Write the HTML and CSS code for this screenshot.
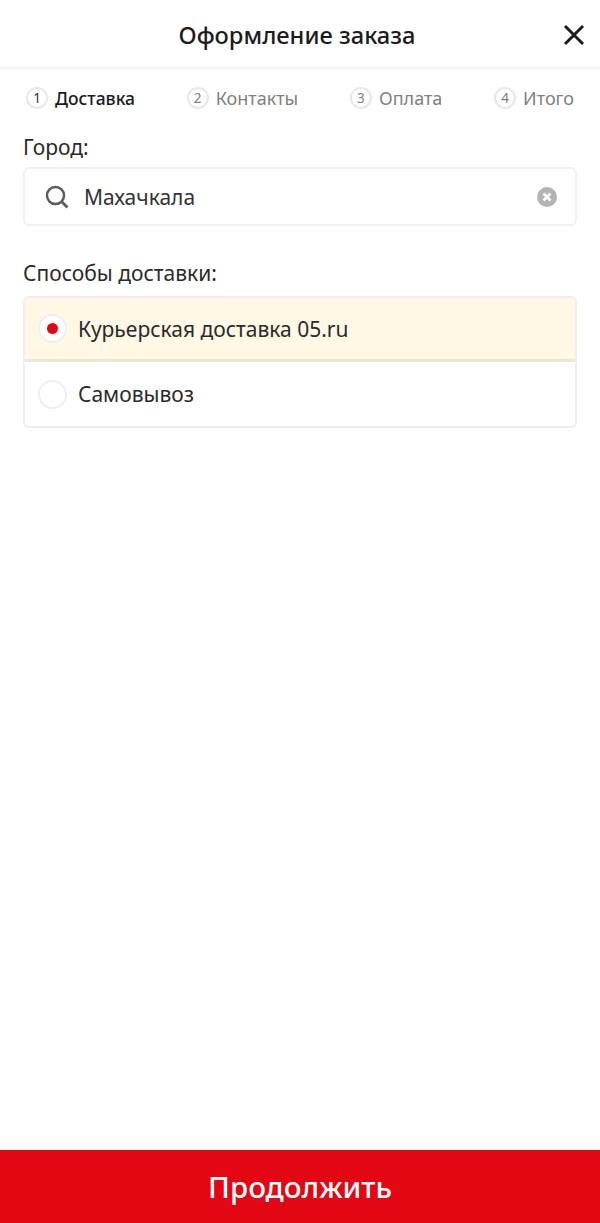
FILE: index.html
```html
<!DOCTYPE html>
<html lang="ru">
<head>
<meta charset="utf-8">
<title>Оформление заказа</title>
<link rel="stylesheet" href="styles.css">
</head>
<body>
<div class="page">
  <header class="header">
    <h1 class="title">Оформление заказа</h1>
    <svg class="close" viewBox="0 0 22 22" width="22" height="22"><path d="M2 2 L20 20 M20 2 L2 20" fill="none" stroke="#1c1c1c" stroke-width="3"/></svg>
  </header>
  <nav class="steps">
    <div class="step active"><span class="num">1</span><span>Доставка</span></div>
    <div class="step"><span class="num">2</span><span>Контакты</span></div>
    <div class="step"><span class="num">3</span><span>Оплата</span></div>
    <div class="step"><span class="num">4</span><span>Итого</span></div>
  </nav>
  <main class="content">
    <div class="label city-label">Город:</div>
    <div class="search">
      <svg class="search-icon" viewBox="0 0 24 24" width="24" height="24"><circle cx="10.5" cy="10.5" r="8.5" fill="none" stroke="#5c5c5c" stroke-width="2.5"/><path d="M16.5 16.5 L22.5 22.5" stroke="#5c5c5c" stroke-width="2.8" fill="none"/></svg>
      <span class="city">Махачкала</span>
      <svg class="clear" viewBox="0 0 20 20" width="20" height="20"><circle cx="10" cy="10" r="10" fill="#b3b3b3"/><path d="M6.5 6.5 L13.5 13.5 M13.5 6.5 L6.5 13.5" stroke="#fff" stroke-width="2.6" fill="none"/></svg>
    </div>
    <div class="label methods-label">Способы доставки:</div>
    <div class="methods">
      <div class="method selected"><span class="radio"><span class="dot"></span></span><span>Курьерская доставка 05.ru</span></div>
      <div class="method"><span class="radio"></span><span>Самовывоз</span></div>
    </div>
  </main>
  <button class="continue">Продолжить</button>
</div>
</body>
</html>
```
FILE: styles.css
```css
* { box-sizing: border-box; }
html, body { margin: 0; height: 100%; }
body { background: #fff; font-family: "Noto Sans", "Open Sans", sans-serif; color: #222; }
.page { height: 1223px; display: flex; flex-direction: column; }
.header { height: 69px; border-bottom: 2px solid #f3f3f3; display: flex; align-items: center; justify-content: center; position: relative; padding: 3px 6px 0 0; }
.title { margin: 0; font-size: 23.7px; font-weight: 500; color: #1c1c1c; line-height: 32px; }
.close { position: absolute; right: 15px; top: 24px; }
.steps { display: flex; justify-content: space-between; padding: 17px 26px 0 26px; height: 58px; }
.step { display: flex; align-items: center; gap: 7px; height: 24px; font-size: 18px; color: #808080; }
.step.active { color: #1c1c1c; font-weight: 500; font-size: 17.5px; }
.num { width: 22px; height: 22px; border: 2px solid #e8e8e8; border-radius: 50%; display: flex; align-items: center; justify-content: center; font-size: 13.5px; font-weight: 400; color: #808080; }
.step.active .num { color: #333; }
.content { flex: 1; padding: 0 23px; }
.label { font-size: 21px; line-height: 28px; color: #2a2a2a; }
.city-label { margin-top: 6px; }
.search { margin-top: 6px; height: 59px; border: 2px solid #f0f0f0; border-radius: 6px; display: flex; align-items: center; padding: 0 18px 0 20px; }
.search-icon { flex: none; }
.city { flex: 1; margin-left: 15px; font-size: 21px; color: #333; }
.methods-label { margin-top: 33px; }
.methods { margin-top: 9px; border: 2px solid #eeeeee; border-radius: 6px; overflow: hidden; }
.method { height: 64px; display: flex; align-items: center; gap: 11px; padding-left: 13px; font-size: 21px; color: #2a2a2a; }
.method.selected { height: 66px; background: #fff8e4; border-bottom: 3px solid #ece7d4; margin: -2px -2px 0; padding-left: 15px; padding-right: 2px; border-top: 2px solid #f3ecd4; }
.radio { width: 29px; height: 29px; border-radius: 50%; background: #fff; border: 2px solid #eeeeee; display: flex; align-items: center; justify-content: center; flex: none; }
.dot { width: 11px; height: 11px; border-radius: 50%; background: #e30613; }
.continue { height: 73px; flex: none; border: 0; background: #e30613; color: #fff; font-family: inherit; font-size: 29.5px; font-weight: 500; width: 100%; padding: 0; }
```
